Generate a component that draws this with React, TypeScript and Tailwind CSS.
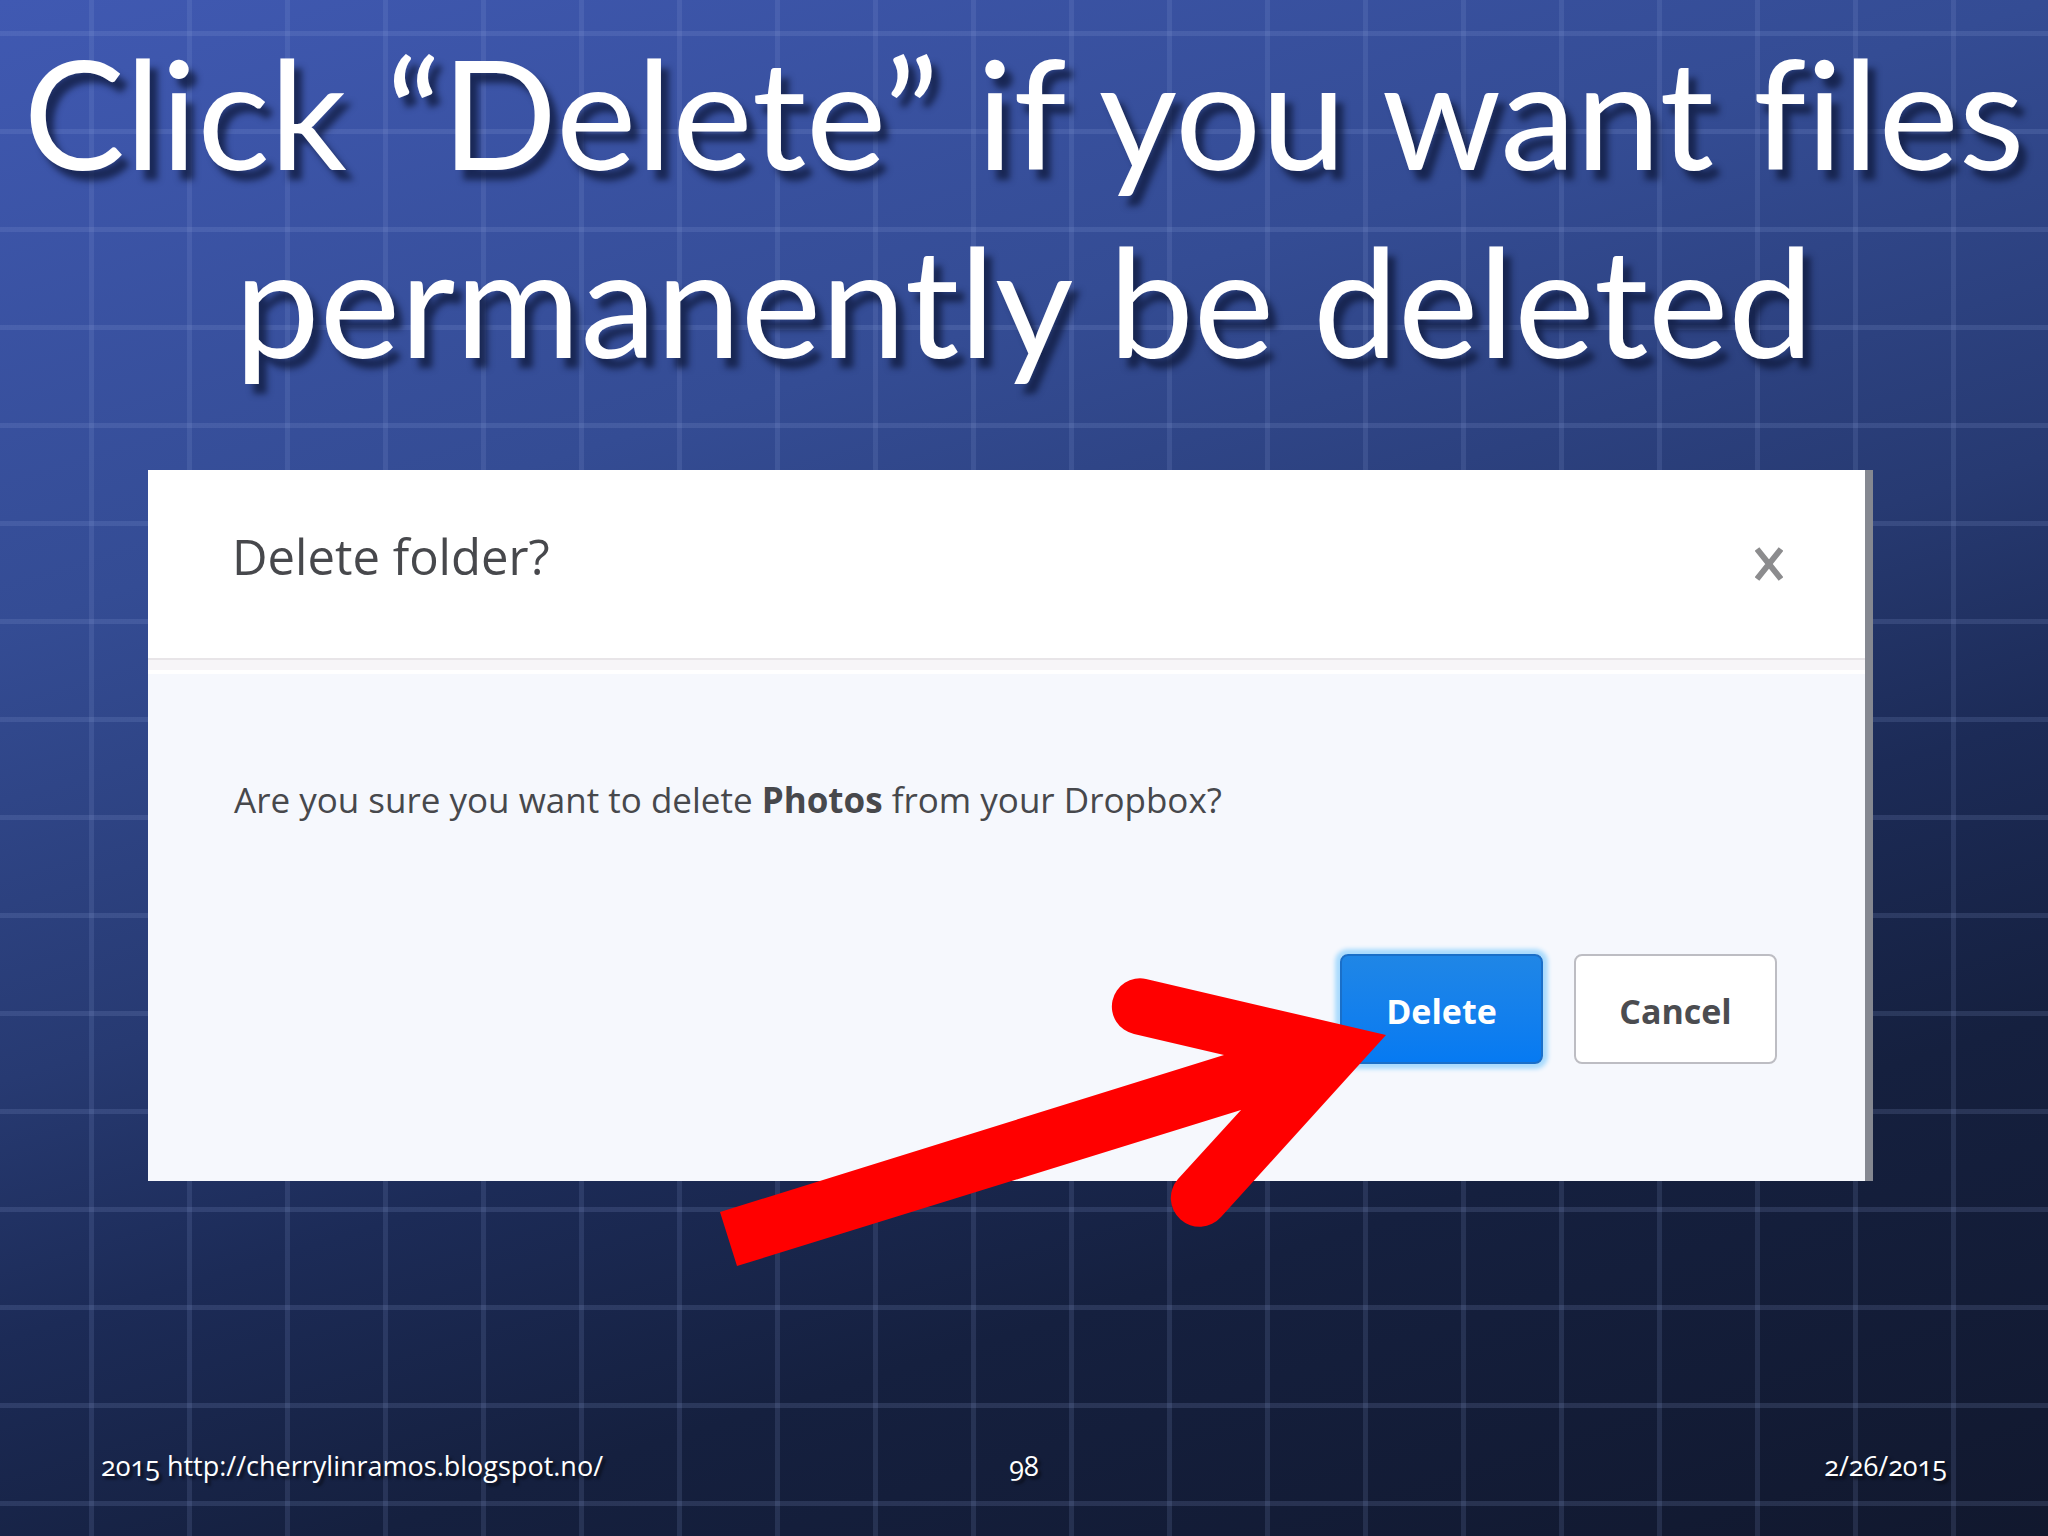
import type { ReactNode } from 'react';

interface DialogButtonProps {
  variant: 'primary' | 'secondary';
  children: ReactNode;
}

function DialogButton({ variant, children }: DialogButtonProps) {
  return (
    <button
      type="button"
      className={`h-[110px] w-[203px] rounded-lg border-2 pt-1 text-[34px] font-bold ${
        variant === 'primary'
          ? 'border-[#1a6fc8] bg-linear-to-b from-[#1f86e6] to-[#067af2] text-white shadow-[0_0_4px_5px_#a9dbfd]'
          : 'border-[#bdbdc3] bg-white text-[#4b4c50]'
      }`}
    >
      {children}
    </button>
  );
}

function PointerArrow() {
  return (
    <svg
      viewBox="0 0 666 290"
      className="pointer-events-none absolute right-[479px] bottom-[-86px] h-[290px] w-[666px]"
      aria-hidden="true"
    >
      <path
        d="M666 58 L426 2 A28 28 0 0 0 414 57 L504 78 L0 235 L17 289 L521 133 L458 202 A28 28 0 0 0 501 240 Z"
        fill="#ff0000"
      />
    </svg>
  );
}

function DeleteDialog() {
  return (
    <section
      role="dialog"
      aria-labelledby="dialog-title"
      className="relative border-r-8 border-[#858891] bg-[#f6f8fd] text-[#47484c]"
    >
      <header className="flex h-[188px] items-center justify-between bg-white pr-[82px] pl-[84px]">
        <h2 id="dialog-title" className="pb-4 text-[49px] leading-[64px]">
          Delete folder?
        </h2>
        <button type="button" aria-label="Close" className="text-[#8c8c8e]">
          <svg viewBox="0 0 28 34" className="h-[34px] w-[28px]" stroke="currentColor" strokeWidth="6">
            <path d="M2 2 L26 32 M26 2 L2 32" />
          </svg>
        </button>
      </header>
      {/* Divider */}
      <div className="h-[12px] border-t-2 border-[#e8e5e8] bg-[#f7f5f8]" />
      <div className="h-[4px] bg-white" />

      <div className="pr-[88px] pb-[117px] pl-[86px]">
        <p className="pt-[102px] text-[35px] leading-[48px]">
          Are you sure you want to delete <strong className="font-bold">Photos</strong> from your Dropbox?
        </p>
        <div className="mt-[130px] flex justify-end gap-[31px]">
          <DialogButton variant="primary">Delete</DialogButton>
          <DialogButton variant="secondary">Cancel</DialogButton>
        </div>
      </div>

      <PointerArrow />
    </section>
  );
}

export default function App() {
  return (
    <main
      className="flex min-h-screen flex-col font-['Open_Sans','Noto_Sans',sans-serif] bg-[linear-gradient(90deg,rgba(150,170,225,0.14)_5px,transparent_5px),linear-gradient(rgba(150,170,225,0.16)_5px,transparent_5px),linear-gradient(163deg,#4059b2_0%,#344c94_29%,#273a72_50%,#1c2b57_62%,#15203f_76%,#11182e_100%)] bg-size-[98px_98px,98px_98px,100%_100%] bg-position-[89px_0,0_31px,0_0]"
    >
      <h1 className="pt-[17px] text-center font-['Lato','Open_Sans',sans-serif] text-[152px] leading-[188px] whitespace-nowrap text-white [font-variant-ligatures:none] [text-shadow:8px_10px_6px_rgba(15,25,60,0.75)]">
        Click “Delete” if you want files
        <br />
        permanently be deleted
      </h1>

      <div className="mt-[77px] pr-[175px] pl-[148px]">
        <DeleteDialog />
      </div>

      <footer className="mt-auto grid grid-cols-3 px-[101px] pb-[50px] text-[27px] leading-[40px] text-white oldstyle-nums [text-shadow:3px_3px_3px_rgba(0,0,0,0.6)]">
        <span>
          2015 <a href="http://cherrylinramos.blogspot.no/">http://cherrylinramos.blogspot.no/</a>
        </span>
        <span className="text-center">98</span>
        <time dateTime="2015-02-26" className="text-right">
          2/26/2015
        </time>
      </footer>
    </main>
  );
}
